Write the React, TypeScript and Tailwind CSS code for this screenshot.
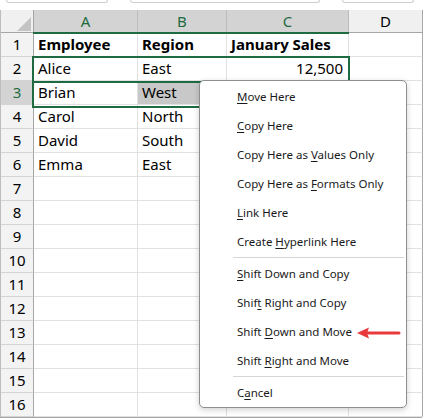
import React from "react";

type Item = { pre: string; key: string; post: string };

const menu: (Item | "sep")[] = [
  { pre: "", key: "M", post: "ove Here" },
  { pre: "", key: "C", post: "opy Here" },
  { pre: "Copy Here as ", key: "V", post: "alues Only" },
  { pre: "Copy Here as ", key: "F", post: "ormats Only" },
  { pre: "", key: "L", post: "ink Here" },
  { pre: "Create ", key: "H", post: "yperlink Here" },
  "sep",
  { pre: "", key: "S", post: "hift Down and Copy" },
  { pre: "Shif", key: "t", post: " Right and Copy" },
  { pre: "Shift ", key: "D", post: "own and Move" },
  { pre: "Shift ", key: "R", post: "ight and Move" },
  "sep",
  { pre: "C", key: "a", post: "ncel" },
];

const data: string[][] = [
  ["Employee", "Region", "January Sales", ""],
  ["Alice", "East", "12,500", ""],
  ["Brian", "West", "", ""],
  ["Carol", "North", "", ""],
  ["David", "South", "", ""],
  ["Emma", "East", "", ""],
];

const letters = ["A", "B", "C", "D"];

const CornerCell = () => (
  <div className="bg-[#f0f0f0] border-r border-b border-[#a6a6a6] relative">
    <svg width="33" height="23" className="block">
      <polygon points="16,21 30,21 30,7" fill="#c4c4c4" />
    </svg>
  </div>
);

export default function App() {
  const rows = Array.from({ length: 16 }, (_, i) => i + 1);

  return (
    <div
      className="w-[424px] h-[420px] bg-white relative overflow-hidden text-black"
      style={{ fontFamily: '"Noto Sans", "Open Sans", sans-serif' }}
    >
      {/* bits of the formula bar above */}
      <div className="h-[10px] flex gap-[22px] px-[6px]">
        <div className="w-[102px] h-[3px] border-x border-b border-[#cfcfcf] rounded-b-[3px]" />
        <div className="w-[190px] h-[3px] border-x border-b border-[#cfcfcf] rounded-b-[3px]" />
        <div className="w-[72px] h-[3px] border-x border-b border-[#cfcfcf] rounded-b-[3px]" />
      </div>

      {/* grid */}
      <div className="w-[422px] grid grid-cols-[33px_104px_89px_122px_74px] grid-rows-[23px_repeat(16,24px)] border-l border-[#bdbdbd]">
        <CornerCell />
        {letters.map((l, i) => (
          <div
            key={l}
            className={`flex items-center justify-center text-[15px] border-r border-b ${
              i < 3
                ? "bg-[#d3d3d3] text-[#1e6b41] border-[#bcbcbc]"
                : "bg-[#f0f0f0] text-black border-[#a6a6a6] border-r-[#a6a6a6]"
            }`}
          >
            {l}
          </div>
        ))}

        {rows.map((r) => {
          const vals = data[r - 1] ?? ["", "", "", ""];
          return (
            <React.Fragment key={r}>
              <div
                className={`flex items-center justify-center text-[15px] border-r border-b border-r-[#a6a6a6] border-b-[#d4d4d4] ${
                  r === 3 ? "bg-[#d3d3d3] text-[#1e6b41]" : "bg-[#f3f3f3]"
                }`}
              >
                {r}
              </div>
              {vals.map((v, c) => (
                <div
                  key={c}
                  className={`flex items-center px-[4px] text-[15px] border-r border-b border-[#e1e1e1] whitespace-nowrap ${
                    c === 3 ? "border-r-[#a6a6a6]" : ""
                  } ${r === 1 ? "font-bold" : ""} ${
                    r === 2 && c === 2 ? "justify-end pr-[5px]" : ""
                  } ${r === 3 && c === 1 ? "bg-[#c8c8c8]" : ""}`}
                >
                  {v}
                </div>
              ))}
            </React.Fragment>
          );
        })}
      </div>
      <div className="w-[422px] h-px bg-[#a6a6a6]" />

      {/* selection outlines */}
      <div className="absolute left-[33px] top-[32px] w-[316px] h-[2px] bg-[#1e6b41]" />
      <div className="absolute left-[32px] top-[56px] w-[318px] h-[27px] border-2 border-[#1e6b41]" />
      <div className="absolute left-[32px] top-[81px] w-[196px] h-[27px] border-2 border-[#1e6b41]" />

      {/* context menu */}
      <div className="absolute left-[199px] top-[80px] w-[208px] h-[328px] bg-white border border-[#8e8e8e] rounded-[5px] shadow-[0_2px_6px_rgba(0,0,0,0.18)] pt-[1px] text-[11.5px] text-[#1a1a1a]">
        {menu.map((m, i) =>
          m === "sep" ? (
            <div key={i} className="h-px bg-[#d6d6d6] ml-[33px] mr-[2px] my-[1px]" />
          ) : (
            <div key={i} className="h-[29px] flex items-center pl-[37px]">
              <span className="whitespace-pre">
                {m.pre}
                <span className="underline underline-offset-2">{m.key}</span>
                {m.post}
              </span>
            </div>
          )
        )}
      </div>

      {/* red arrow */}
      <svg className="absolute left-[355px] top-[326px]" width="48" height="14" viewBox="0 0 48 14">
        <line x1="12" y1="7" x2="44" y2="7" stroke="#e8393c" strokeWidth="3" strokeLinecap="round" />
        <polygon points="2,7 14,1.5 12,7 14,12.5" fill="#e8393c" />
      </svg>
    </div>
  );
}
